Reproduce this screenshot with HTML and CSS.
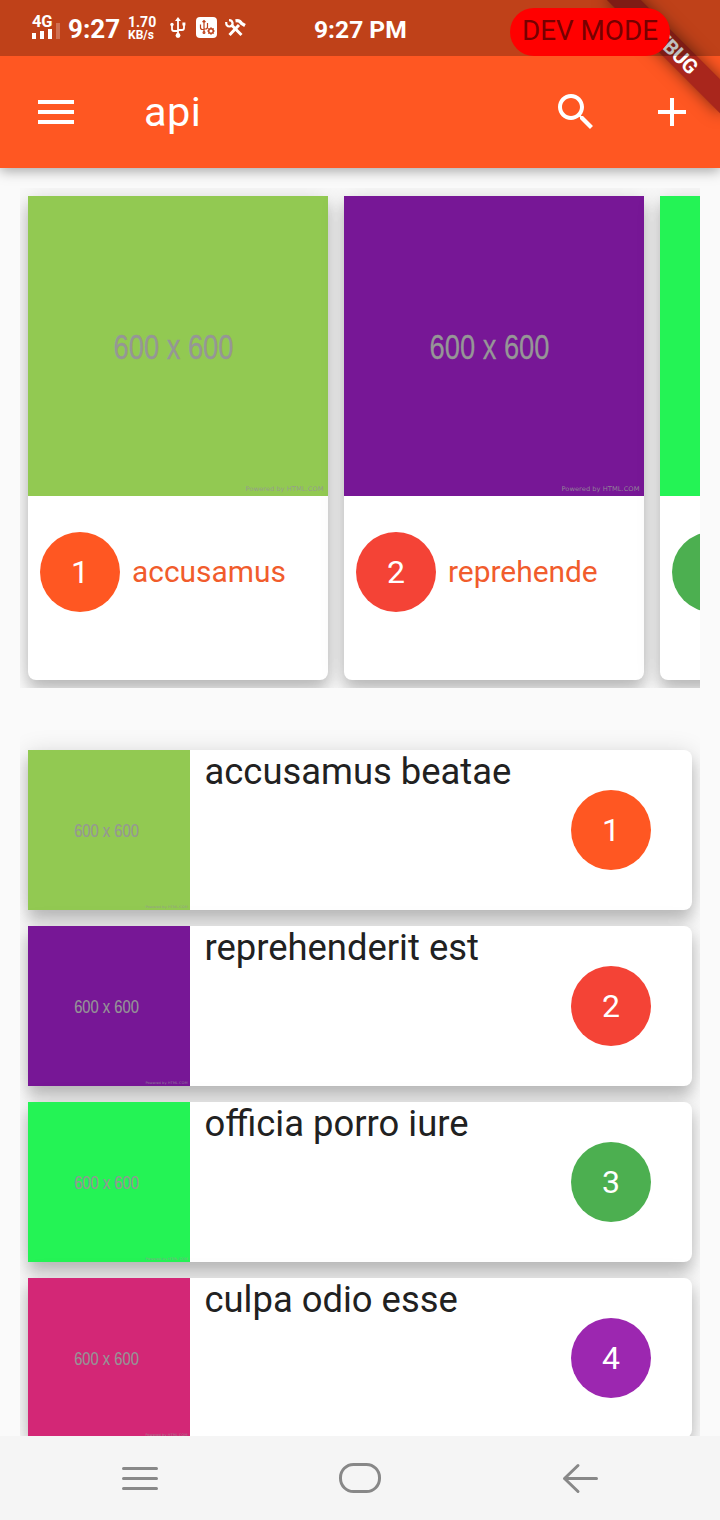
FILE: index.html
```html
<!DOCTYPE html>
<html lang="en">
<head>
<meta charset="utf-8">
<title>api</title>
<link rel="stylesheet" href="styles.css">
</head>
<body>
<svg width="0" height="0" class="defs">
  <symbol id="placeholder" viewBox="0 0 300 300" preserveAspectRatio="xMidYMid slice">
    <text x="85.500" y="163" font-family="Liberation Sans, sans-serif" font-size="35" textLength="120" lengthAdjust="spacingAndGlyphs" fill="#969696" stroke="#969696" stroke-width=".3">600 x 600</text>
    <text x="217.500" y="295" font-family="DejaVu Sans, sans-serif" font-size="6.400" textLength="78" lengthAdjust="spacingAndGlyphs" fill="#969696" fill-opacity=".85">Powered by HTML.COM</text>
  </symbol>
</svg>
<div class="phone">
  <header class="top">
    <div class="statusbar">
      <div class="network">
        <span class="network-type">4G</span>
        <svg width="28" height="16" viewBox="0 0 28 16"><path fill="#fff" d="M0 10h4v6H0zM8 8h4v8H8zM16 6h4v10h-4z"/><path fill="#fff" fill-opacity=".25" d="M24 0h4v16h-4z"/></svg>
      </div>
      <span class="clock">9:27</span>
      <div class="speed"><span>1.70</span><span>KB/s</span></div>
      <svg class="usb" width="16" height="21" viewBox="0 0 16 21" fill="none" stroke="#fff" stroke-width="1.800"><path d="M8 3v16M2 8v4q0 2 2 2h4M14 7v4q0 2-2 2H8"/><path fill="#fff" stroke="none" d="M8 0l3 4H5z"/><circle cx="8" cy="18.500" r="2.400" fill="#fff" stroke="none"/><circle cx="2" cy="7.500" r="1.700" fill="#fff" stroke="none"/><path d="M12.400 5.500h3v3h-3z" fill="#fff" stroke="none"/></svg>
      <svg class="usb-set" width="21" height="21" viewBox="0 0 21 21"><rect width="21" height="21" rx="4" fill="#fff"/><g fill="none" stroke="#bf421a" stroke-width="1.200"><path d="M8 4v11M4.500 7.500v3q0 2 2 2H8M11.500 6v4q0 2-2 2H8M6.500 5L8 3.500 9.500 5"/><circle cx="8" cy="15.500" r=".9"/><circle cx="15" cy="14" r="2.300" stroke-width="1.500"/><path d="M15 10.200v1.500M15 16.300v1.500M11.200 14h1.500M17.300 14h1.500M12.400 11.400l1 1M16.600 15.600l1 1M17.600 11.400l-1 1M12.400 16.600l1-1"/></g></svg>
      <svg class="tools" width="21" height="18" viewBox="0 0 21 18" fill="none" stroke="#fff"><path stroke-width="3" d="M6 5.500l10.500 10.500M4.500 16L14 6"/><path stroke-width="2.200" d="M1.200 3q-.2 4.500 3.300 4.500T7.500 4Q7.200 1.300 4 1.200"/><path stroke-width="3.200" d="M10.500 1.800q4.500-.8 6 2.700l3.500 2"/></svg>
      <span class="clock-mid">9:27 PM</span>
    </div>
    <div class="appbar">
      <svg class="menu" width="36" height="24" viewBox="0 0 36 24"><path fill="#fff" d="M0 0h36v4H0zM0 10h36v4H0zM0 20h36v4H0z"/></svg>
      <h1>api</h1>
      <svg class="search" width="48" height="48" viewBox="0 0 24 24"><path fill="#fff" d="M15.500 14h-.79l-.28-.27C15.410 12.590 16 11.110 16 9.500 16 5.910 13.090 3 9.500 3S3 5.910 3 9.500 5.910 16 9.500 16c1.610 0 3.090-.59 4.230-1.570l.27.28v.79l5 4.990L20.490 19l-4.990-5zm-6 0C7.010 14 5 11.990 5 9.500S7.010 5 9.500 5 14 7.010 14 9.500 11.990 14 9.500 14z"/></svg>
      <svg class="add" width="48" height="48" viewBox="0 0 24 24"><path fill="#fff" d="M19 13h-6v6h-2v-6H5v-2h6V5h2v6h6v2z"/></svg>
    </div>
    <div class="banner"><span>DEBUG</span></div>
    <div class="status-shade"></div>
    <div class="devmode">DEV MODE</div>
  </header>

  <main>
    <section class="carousel">
      <article class="tile">
        <svg class="pic lime"><use href="#placeholder"/></svg>
        <div class="tile-row"><span class="avatar orange">1</span><span class="name">accusamus</span></div>
      </article>
      <article class="tile">
        <svg class="pic purple"><use href="#placeholder"/></svg>
        <div class="tile-row"><span class="avatar red">2</span><span class="name">reprehende</span></div>
      </article>
      <article class="tile">
        <svg class="pic neon"></svg>
        <div class="tile-row"><span class="avatar green"></span></div>
      </article>
    </section>
    <section class="list">
      <article class="item">
        <svg class="pic lime"><use href="#placeholder"/></svg>
        <h2>accusamus beatae</h2><span class="avatar orange">1</span>
      </article>
      <article class="item">
        <svg class="pic purple"><use href="#placeholder"/></svg>
        <h2>reprehenderit est</h2><span class="avatar red">2</span>
      </article>
      <article class="item">
        <svg class="pic neon"><use href="#placeholder"/></svg>
        <h2>officia porro iure</h2><span class="avatar green">3</span>
      </article>
      <article class="item">
        <svg class="pic pink"><use href="#placeholder"/></svg>
        <h2>culpa odio esse</h2><span class="avatar violet">4</span>
      </article>
    </section>
  </main>

  <nav class="navbar">
    <svg width="42" height="32" viewBox="0 0 42 32"><path d="M4.500 6.500h33M4.500 16.500h33M4.500 26.500h33"/></svg>
    <svg width="42" height="32" viewBox="0 0 42 32"><rect x="1.500" y="2.500" width="39" height="27" rx="13"/></svg>
    <svg width="42" height="32" viewBox="0 0 42 32"><path d="M37.500 16.500H5.500M19 3.500L5.500 16.500l13.500 13"/></svg>
  </nav>
</div>
</body>
</html>
```
FILE: styles.css
```css
* { box-sizing: border-box; }
body { margin: 0; font-family: Roboto, sans-serif; background: #fafafa; }
.phone { width: 720px; height: 1520px; display: flex; flex-direction: column; overflow: hidden; }
svg { flex: none; display: block; }
.defs { display: none; }

.top { position: relative; z-index: 2; height: 168px; flex: none; background: #ff5722; box-shadow: 0 3px 12px rgba(0,0,0,.34); clip-path: inset(0 0 -30px 0); }
.statusbar { position: relative; z-index: 3; height: 56px; display: flex; align-items: flex-start; padding-left: 32px; color: #fff; font-weight: 700; }
.network { width: 28px; padding-top: 14px; height: 40px; }
.network-type { display: block; font-size: 16.500px; line-height: 15px; height: 9px; letter-spacing: -.3px; }
.clock { width: 60px; padding-left: 8px; font-size: 26px; line-height: 56px; margin-top: 1px; }
.speed { width: 42px; padding: 16px 0 0 8px; font-size: 14px; line-height: 13px; display: flex; flex-direction: column; white-space: nowrap; }
.speed span + span { font-size: 12px; }
.usb { margin: 17px 0 0 8px; }
.usb-set { margin: 17px 0 0 10px; }
.tools { margin: 19px 0 0 8px; }
.clock-mid { margin-left: 68px; font-size: 24.600px; line-height: 60px; white-space: nowrap; }
.status-shade { position: absolute; inset: 0 0 auto; height: 56px; background: rgba(0,0,0,.25); z-index: 2; }
.devmode { position: absolute; z-index: 4; left: 510px; top: 8px; width: 160px; height: 48px; border-radius: 24px; background: #f00; color: #760000; font-size: 27.800px; line-height: 46px; text-align: center; white-space: nowrap; }
.banner { position: absolute; z-index: 1; left: 640px; top: 56px; width: 160px; height: 24px; transform: rotate(45deg); transform-origin: 80px -56px; background: #a9261c; box-shadow: 0 0 16px rgba(0,0,0,.5); color: #fff; font-size: 20.400px; font-weight: 700; line-height: 24px; text-align: center; }
.banner span { letter-spacing: -.4px; }

.appbar { height: 112px; display: flex; align-items: center; padding: 0 24px 0 38px; }
h1 { margin: 0 auto 0 70px; font-size: 41.500px; font-weight: 400; color: #fff; line-height: 48px; letter-spacing: .4px; }
.search { margin-right: 48px; }

main { flex: 1; min-height: 0; padding: 0 20px; overflow: hidden; }
.carousel { margin-top: 20px; height: 500px; padding: 8px; display: flex; gap: 16px; overflow: hidden; }
.tile, .item { background: #fff; box-shadow: 0 10px 14px rgba(0,0,0,.18), 0 3px 24px rgba(0,0,0,.15); }
.tile { width: 300px; height: 484px; flex: none; border-radius: 0 0 8px 8px; }
.pic { width: 300px; height: 300px; }
.tile-row { display: flex; align-items: center; gap: 12px; padding: 36px 12px 0; }
.name { font-size: 29.900px; line-height: 36px; color: #f15c2c; }
.avatar { width: 80px; height: 80px; border-radius: 50%; flex: none; display: flex; align-items: center; justify-content: center; color: #fff; font-size: 32px; line-height: 40px; }
.list { margin-top: 34px; padding: 28px 8px; display: flex; flex-direction: column; gap: 16px; overflow: hidden; }
.item { height: 160px; flex: none; display: flex; align-items: flex-start; border-radius: 0 8px 8px 0; padding-right: 41px; }
.item .pic { width: 162px; height: 160px; }
.item .avatar { margin-top: 40px; }
h2 { margin: 0 auto 0 14.500px; font-size: 36.400px; line-height: 43px; font-weight: 400; color: #212121; white-space: nowrap; }

.lime { background: #92c952; }
.purple { background: #771796; }
.neon { background: #24f355; }
.pink { background: #d32776; }
.orange { background: #ff5722; }
.red { background: #f44336; }
.green { background: #4caf50; }
.violet { background: #9c27b0; }

.navbar { position: relative; height: 84px; flex: none; background: #f5f5f5; display: flex; justify-content: space-between; padding: 26px 119px 0; }
.navbar svg { fill: none; stroke: #888; stroke-width: 3; stroke-linecap: round; stroke-linejoin: round; }
```
